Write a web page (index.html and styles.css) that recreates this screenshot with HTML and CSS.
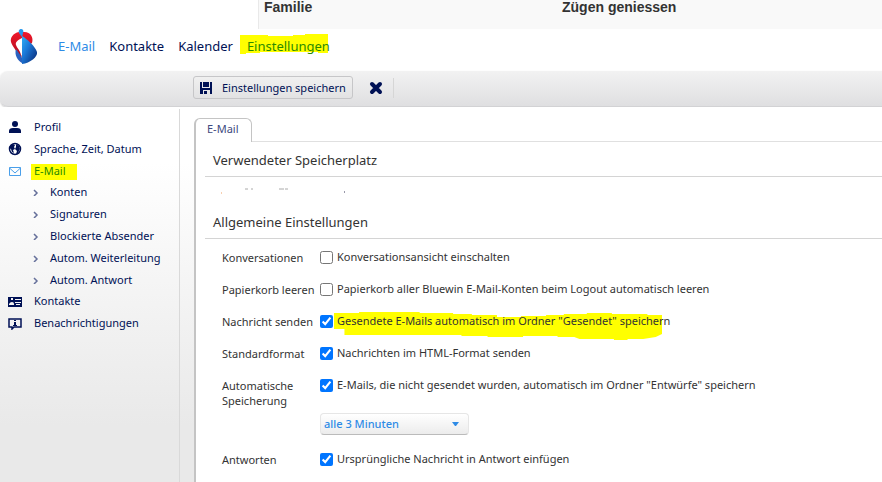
FILE: index.html
```
<!DOCTYPE html>
<html lang="de">
  <head>
    <meta charset="utf-8">
    <meta name="viewport" content="width=device-width, initial-scale=1">
    <title>Einstellungen</title>
    <link rel="stylesheet" href="styles.css">
  </head>
  <body>
    <div class="teaser-bar">
      <div class="teaser">Familie</div>
      <div class="teaser">Zügen geniessen</div>
    </div>

    <header class="header">
      <svg class="logo" width="28" height="36" viewBox="0 0 28 36">
        <defs>
          <linearGradient id="logo-blue" x1="0" y1="0" x2="1" y2="1">
            <stop offset="0" stop-color="#2fb0f5"/>
            <stop offset="0.4" stop-color="#1b78d8"/>
            <stop offset="1" stop-color="#08246e"/>
          </linearGradient>
          <linearGradient id="logo-red" x1="0" y1="0" x2="0" y2="1">
            <stop offset="0" stop-color="#f0182c"/>
            <stop offset="1" stop-color="#a80d1c"/>
          </linearGradient>
        </defs>
        <path d="M9 3C3 4 0 9 1 13c1 4 6 9 10 17l2-9 9-7c2-6-2-12-9-11z" fill="url(#logo-red)"/>
        <path d="M6 20c-2 6 2 12 6 14v-5C10 25 8 23 6 20z" fill="#2a62c0"/>
        <path d="M12 9C8 11 5 13 6 16c1 3 4 5 5 10l1 1z" fill="#fff"/>
        <path d="M12 35V7c5 3 13 10 15 16 1 5-7 11-15 12z" fill="url(#logo-blue)"/>
        <path d="M9 4c-1-3 1-4 2-4 2 0 3 2 2 4l-1 4z" fill="#2397ee"/>
      </svg>
      <nav class="main-nav">
        <a class="main-link main-link-mail" href="#">E-Mail</a>
        <a class="main-link" href="#">Kontakte</a>
        <a class="main-link" href="#">Kalender</a>
        <a class="main-link marked marked-settings" href="#">
          <svg class="marker" viewBox="0 0 88 20" preserveAspectRatio="none"><path d="M0 1h28V2h25V1h12V0h23v19H78v-1H20v1H6v1H0z"/></svg>
          <span>Einstellungen</span>
        </a>
      </nav>
    </header>

    <div class="toolbar">
      <button class="save-btn" type="button">
        <svg width="12" height="12" viewBox="0 0 12 12"><path d="M0 0h2v6h8V0h2v12h-2V8H3v4H0zM3 0h6v5H3zM4 9h3v3H4z"/></svg>
        Einstellungen speichern
      </button>
      <button class="close-btn" type="button" aria-label="Schliessen">
        <svg width="14" height="14" viewBox="0 0 14 14"><path d="M3 3l8 8M11 3l-8 8"/></svg>
      </button>
      <span class="toolbar-divider"></span>
    </div>

    <div class="layout">
      <aside class="sidebar">
        <ul class="menu">
          <li>
            <a href="#">
              <svg width="14" height="14" viewBox="0 0 14 14"><circle cx="7" cy="4" r="3"/><path d="M1 13v-2q0-3 4-3h4q4 0 4 3v2z"/></svg>
              Profil
            </a>
          </li>
          <li>
            <a href="#">
              <svg width="14" height="14" viewBox="0 0 14 14"><circle class="line" cx="7" cy="7" r="5.500"/><path d="M2 4l3-2 2 1-1 2 1 2-2 1 1 3-2-1-1-3-2-1zM8 2l3 2 1 3-2 4-2 1 1-3-2-2 1-2z"/></svg>
              Sprache, Zeit, Datum
            </a>
          </li>
          <li>
            <a class="active marked marked-mail" href="#">
              <svg width="14" height="14" viewBox="0 0 14 14"><path class="line thin" d="M1.500 3.500h11v8h-11zM1.500 4l5.500 5 5.500-5"/></svg>
              <svg class="marker" viewBox="0 0 46 16" preserveAspectRatio="none"><path d="M0 0h46v16H0z"/></svg>
              <span>E-Mail</span>
            </a>
            <ul class="submenu">
              <li><a href="#"><svg width="6" height="8" viewBox="0 0 6 8"><path d="M1 2l3 3-3 3"/></svg>Konten</a></li>
              <li><a href="#"><svg width="6" height="8" viewBox="0 0 6 8"><path d="M1 2l3 3-3 3"/></svg>Signaturen</a></li>
              <li><a href="#"><svg width="6" height="8" viewBox="0 0 6 8"><path d="M1 2l3 3-3 3"/></svg>Blockierte Absender</a></li>
              <li><a href="#"><svg width="6" height="8" viewBox="0 0 6 8"><path d="M1 2l3 3-3 3"/></svg>Autom. Weiterleitung</a></li>
              <li><a href="#"><svg width="6" height="8" viewBox="0 0 6 8"><path d="M1 2l3 3-3 3"/></svg>Autom. Antwort</a></li>
            </ul>
          </li>
          <li>
            <a href="#">
              <svg width="14" height="14" viewBox="0 0 14 14"><path fill-rule="evenodd" d="M0 3h14v10H0zM3 4v2h2V4zM1 10v1h5v-1q0-2-2-2T1 10zM7 5h6v1H7zM7 8h6v1H7zM8 10h4v1H8z"/></svg>
              Kontakte
            </a>
          </li>
          <li>
            <a href="#">
              <svg width="14" height="14" viewBox="0 0 14 14"><path class="line" d="M1 3h12v8H6l-2 2v-2H1z"/><path d="M6 4h2v1H6zM6 6h2v3h1v1H5V9h1z"/></svg>
              Benachrichtigungen
            </a>
          </li>
        </ul>
      </aside>

      <main class="content">
        <button class="tab" type="button">E-Mail</button>
        <div class="panel">
          <h2>Verwendeter Speicherplatz</h2>
          <svg class="quota" width="130" height="8" viewBox="0 0 130 8">
            <path d="M24 1h3M30 1h2M58 1h5M64 1h3" stroke="#aaa"/>
            <path d="M0 5h1" stroke="#f0a060"/>
            <path d="M123 4h1" stroke="#335"/>
          </svg>
          <h2>Allgemeine Einstellungen</h2>
          <form class="settings">
            <div class="row">
              <span class="row-name">Konversationen</span>
              <label><input type="checkbox"><span>Konversationsansicht einschalten</span></label>
            </div>
            <div class="row">
              <span class="row-name">Papierkorb leeren</span>
              <label><input type="checkbox"><span>Papierkorb aller Bluewin E-Mail-Konten beim Logout automatisch leeren</span></label>
            </div>
            <div class="row">
              <span class="row-name">Nachricht senden</span>
              <label class="marked marked-sent">
                <input type="checkbox" checked>
                <svg class="marker" viewBox="0 0 314 29" preserveAspectRatio="none"><path d="M0 1h24V0h58v1h32v1h18v1h24v2h23v-1h24V3h17V2h22V1h24v1h34v1h14v19l-6 3-12 2h-15v1h-13v-1h-33l-5-2h-16v-1h-33v1h-34v-1h-25v-1H10v-6H0z"/></svg>
                <span>Gesendete E-Mails automatisch im Ordner "Gesendet" speichern</span>
              </label>
            </div>
            <div class="row">
              <span class="row-name">Standardformat</span>
              <label><input type="checkbox" checked><span>Nachrichten im HTML-Format senden</span></label>
            </div>
            <div class="row">
              <span class="row-name">Automatische Speicherung</span>
              <div>
                <label><input type="checkbox" checked><span>E-Mails, die nicht gesendet wurden, automatisch im Ordner "Entwürfe" speichern</span></label>
                <div class="select-box">
                  <select aria-label="Automatische Speicherung">
                    <option>alle 3 Minuten</option>
                  </select>
                  <svg width="8" height="4" viewBox="0 0 8 4"><path d="M0 0h7L4 4H3z"/></svg>
                </div>
              </div>
            </div>
            <div class="row">
              <span class="row-name">Antworten</span>
              <label><input type="checkbox" checked><span>Ursprüngliche Nachricht in Antwort einfügen</span></label>
            </div>
          </form>
        </div>
      </main>
    </div>
  </body>
</html>
```
FILE: styles.css
```
* {
  box-sizing: border-box;
}
body {
  margin: 0;
  min-height: 100vh;
  display: flex;
  flex-direction: column;
  background-color: #fff;
  color: #333;
  font-family: "Noto Sans", "Open Sans", sans-serif;
  font-size: 11px;
  line-height: 16px;
  overflow: hidden;
}
a {
  color: #001155;
  text-decoration: none;
}
ul {
  list-style: none;
  margin: 0;
  padding: 0;
}
button, select {
  font: inherit;
}

/* teaser strip above the mail client */
.teaser-bar {
  margin-left: 258px;
  height: 29px;
  display: grid;
  grid-template-columns: 298px 1fr;
  background-color: #f9f9f9;
  border-left: 1px solid #e9e9e9;
  font-family: "Liberation Sans", Arial, sans-serif;
  font-size: 14px;
  line-height: 14px;
  font-weight: bold;
}
.teaser {
  padding-left: 5px;
}

.header {
  height: 42px;
  display: flex;
  align-items: flex-start;
  padding-left: 10px;
}
.main-nav {
  display: flex;
  gap: 14px;
  padding: 7px 0 0 20px;
  font-size: 13px;
  line-height: 20px;
}
.main-link-mail {
  color: #2e8be6;
}

/* yellow text marker */
.marked {
  position: relative;
}
.marked span {
  position: relative;
}
.marker {
  position: absolute;
  fill: #ff0;
}
.marked-settings {
  color: #2a8a00;
}
.marked-settings .marker {
  left: -7px;
  top: -2px;
  width: 88px;
  height: 20px;
}
.marked-mail .marker {
  left: 23px;
  top: 4px;
  width: 46px;
  height: 16px;
}
.marked-sent .marker {
  left: 14px;
  top: -1px;
  width: 328px;
  height: 29px;
}

.toolbar {
  height: 36px;
  flex-shrink: 0;
  display: flex;
  align-items: center;
  padding: 0 0 2px 193px;
  background: linear-gradient(#f2f2f2, #dfdfe1);
  border-bottom: 1px solid #d2d2d4;
  border-radius: 8px 0 0 8px;
  box-shadow: 0 1px 2px #ccc;
}
.save-btn {
  height: 23px;
  display: flex;
  align-items: center;
  gap: 10px;
  padding: 0 6px;
  background: linear-gradient(#f0f0f0, #e2e2e3);
  border: 1px solid #c6c6c8;
  border-radius: 3px;
  color: #001155;
  fill: #001155;
}
.close-btn {
  display: flex;
  margin-left: 16px;
  padding: 0;
  background: none;
  border: none;
}
.close-btn path {
  stroke: #001155;
  stroke-width: 4;
  stroke-linecap: round;
}
.toolbar-divider {
  width: 1px;
  height: 20px;
  margin-left: 10px;
  background-color: #d6d6d6;
}

.layout {
  flex: 1;
  display: flex;
  padding-top: 2px;
  background: linear-gradient(#fff 15%, #f0f0f0 62%, #e9e9e9 85%);
}
.sidebar {
  width: 180px;
  flex-shrink: 0;
  padding: 7px 0 0 8px;
  border-right: 1px solid #d9d9d9;
}
.menu a {
  height: 22px;
  display: flex;
  align-items: center;
  gap: 12px;
  white-space: nowrap;
}
.menu svg {
  fill: #001155;
}
.menu .line {
  fill: none;
  stroke: #001155;
  stroke-width: 1.5;
}
.menu .active .thin {
  stroke: #4a9fea;
  stroke-width: 1;
}
.menu .active {
  color: #2a8a00;
}
.menu .marker {
  fill: #ff0;
}
.submenu {
  margin: -1px 0;
  padding-left: 25px;
}
.submenu a {
  gap: 11px;
}
.submenu path {
  fill: none;
  stroke: #66709a;
  stroke-width: 1.5;
}

.content {
  flex: 1;
  min-width: 0;
  display: flex;
  flex-direction: column;
  align-items: flex-start;
  padding: 9px 0 0 14px;
}
.tab {
  position: relative;
  height: 24px;
  margin-bottom: -1px;
  padding: 0 13px 4px 11px;
  background-color: #fff;
  border: 1px solid #c4c4c4;
  border-left-width: 2px;
  border-bottom: none;
  border-radius: 6px 6px 0 0;
  color: #404a80;
}
.panel {
  flex: 1;
  align-self: stretch;
  padding: 8px 0 0 9px;
  background-color: #fff;
  border-top: 1px solid #e0e0e0;
  border-left: 2px solid #c4c4c4;
}
h2 {
  margin: 0;
  padding: 0 0 6px 8px;
  border-bottom: 1px solid #d4d4d4;
  font-size: 13px;
  line-height: 20px;
  font-weight: normal;
}
.quota {
  display: block;
  margin: 11px 0 16px 16px;
}

.settings {
  display: flex;
  flex-direction: column;
  gap: 16px;
  padding: 10px 0 0 17px;
}
.row {
  display: grid;
  grid-template-columns: 98px 1fr;
}
.row-name {
  line-height: 15px;
  padding-top: 1px;
}
.row label {
  display: flex;
  align-items: flex-start;
  gap: 4px;
}
.row input {
  width: 13px;
  height: 13px;
  margin: 2px 0 0;
}
.select-box {
  width: 149px;
  display: flex;
  align-items: center;
  margin-top: 20px;
  padding-right: 8px;
  background: linear-gradient(#fff, #ececec);
  border: 1px solid #e6e6e6;
  border-bottom-color: #bbb;
  border-radius: 4px;
}
.select-box select {
  flex: 1;
  height: 20px;
  padding: 0 3px;
  appearance: none;
  background: none;
  border: none;
  color: #2e8be6;
  font-weight: 500;
}
.select-box svg {
  fill: #2e8be6;
}
```
